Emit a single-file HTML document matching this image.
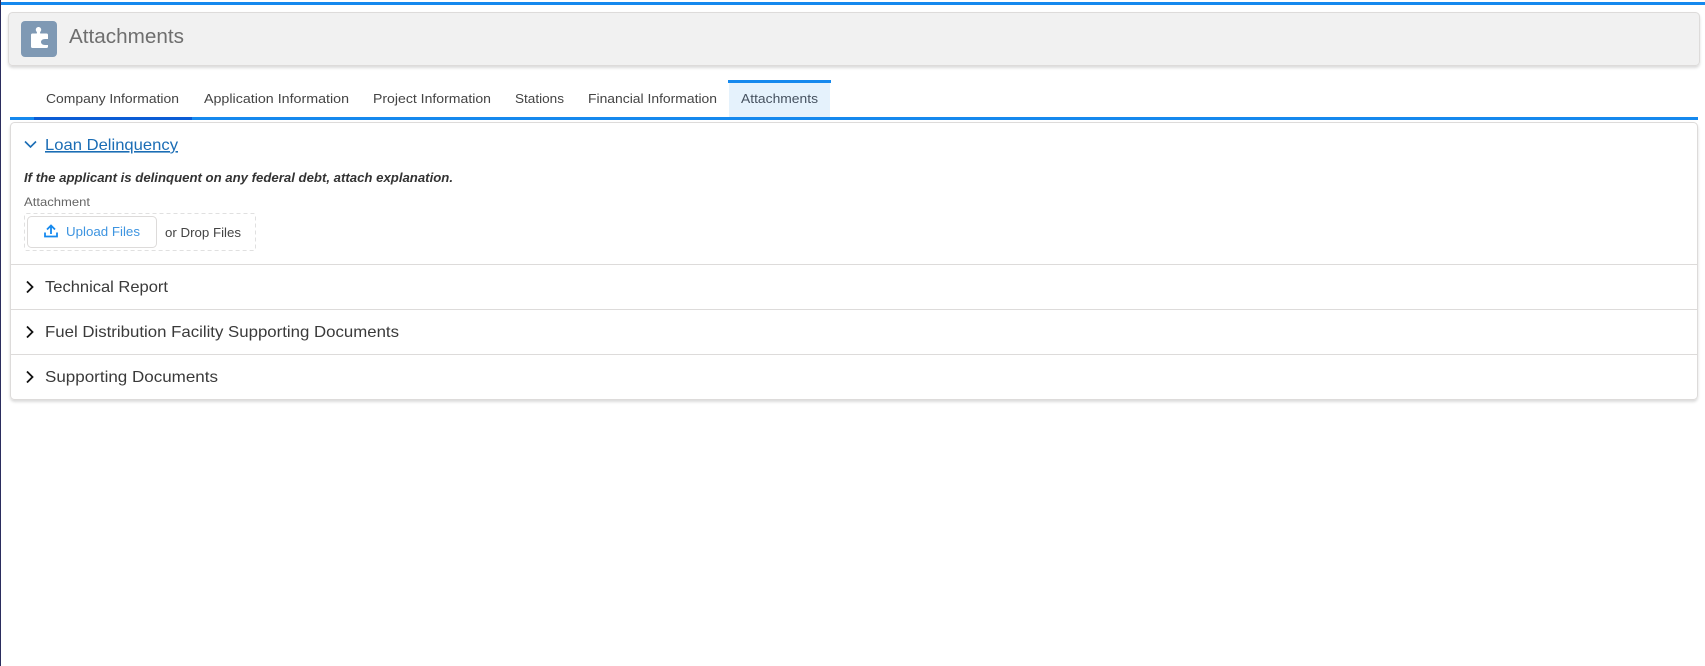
<!DOCTYPE html>
<html lang="en">
<head>
<meta charset="utf-8">
<title>Attachments</title>
<style>
html,body{margin:0;padding:0;background:#fff;width:1705px;height:666px;overflow:hidden}
svg{display:block;position:absolute;left:0;top:0}
text{font-family:"Liberation Sans",sans-serif}
</style>
</head>
<body>
<svg width="1705" height="666" viewBox="0 0 1705 666" xmlns="http://www.w3.org/2000/svg">
<defs>
<filter id="s" x="-2%" y="-10%" width="104%" height="125%">
<feDropShadow dx="0" dy="2" stdDeviation="1.200" flood-color="#000" flood-opacity="0.14"/>
</filter>
</defs>
<rect x="0" y="0" width="1" height="666" fill="#2b2d5e"/>
<rect x="1" y="2" width="1704" height="3" fill="#1589ee"/>

<rect x="8.500" y="12.500" width="1691" height="53" rx="4" fill="#f1f1f1" stroke="#dddbda" filter="url(#s)"/>
<rect x="21" y="21" width="36" height="36" rx="4" fill="#7f99b4"/>
<path d="M31 35q0-1.500 1.500-1.500H36.500q.8 0 .4-1.200c-.5-1-1.100-1.400-1.100-2.500 0-1.600 1.200-2.800 2.700-2.800s2.700 1.200 2.700 2.800c0 1.100-.6 1.500-1.100 2.500q-.4 1.200.4 1.200H46.500q1.500 0 1.500 1.500V39h-3c-2.500 0-4 1.400-4 3s1.500 3 4 3h3v1.500q0 1.500-1.500 1.500h-14q-1.500 0-1.500-1.500z" fill="#fff"/>
<text x="69" y="43" font-size="20" fill="#6e6e6e" textLength="115" lengthAdjust="spacingAndGlyphs">Attachments</text>

<g font-size="13" fill="#444">
<text x="46" y="103" textLength="133" lengthAdjust="spacingAndGlyphs">Company Information</text>
<text x="204" y="103" textLength="145" lengthAdjust="spacingAndGlyphs">Application Information</text>
<text x="373" y="103" textLength="118" lengthAdjust="spacingAndGlyphs">Project Information</text>
<text x="515" y="103" textLength="49" lengthAdjust="spacingAndGlyphs">Stations</text>
<text x="588" y="103" textLength="129" lengthAdjust="spacingAndGlyphs">Financial Information</text>
</g>
<rect x="729" y="83" width="101" height="34" fill="#e5f2fc"/>
<rect x="728" y="80" width="103" height="3" fill="#1589ee"/>
<text x="741" y="103" font-size="13" fill="#465260" textLength="77" lengthAdjust="spacingAndGlyphs">Attachments</text>
<rect x="10" y="117" width="1688" height="3" fill="#1589ee"/>
<rect x="34" y="117" width="158" height="3" fill="#0b5cd5"/>

<rect x="10.500" y="122.500" width="1687" height="277" rx="4" fill="#fff" stroke="#dddbda" filter="url(#s)"/>
<path d="M25 141.500l5.500 5.500 5.500-5.500" fill="none" stroke="#1b6db5" stroke-width="1.600"/>
<text x="45" y="150" font-size="16" fill="#1b6db5" text-decoration="underline" textLength="133" lengthAdjust="spacingAndGlyphs">Loan Delinquency</text>
<text x="24" y="182" font-size="13" font-weight="bold" font-style="italic" fill="#333" textLength="429" lengthAdjust="spacingAndGlyphs">If the applicant is delinquent on any federal debt, attach explanation.</text>
<text x="24" y="206" font-size="12" fill="#666" textLength="66" lengthAdjust="spacingAndGlyphs">Attachment</text>
<rect x="24.500" y="213.500" width="231" height="37" rx="2" fill="#fff" stroke="#e0e0e0" stroke-dasharray="4 3"/>
<rect x="27.500" y="216.500" width="129" height="31" rx="4" fill="#fff" stroke="#dddbda"/>
<path d="M45 232.500v4h12v-4M51 234v-8M47 229.500l4-4 4 4" fill="none" stroke="#1589ee" stroke-width="1.800"/>
<text x="66" y="236" font-size="13" fill="#3d94e0" textLength="74" lengthAdjust="spacingAndGlyphs">Upload Files</text>
<text x="165" y="237" font-size="13" fill="#444" textLength="76" lengthAdjust="spacingAndGlyphs">or Drop Files</text>

<rect x="11" y="264" width="1686" height="1" fill="#dddbda"/>
<rect x="11" y="309" width="1686" height="1" fill="#dddbda"/>
<rect x="11" y="354" width="1686" height="1" fill="#dddbda"/>
<g fill="none" stroke="#111" stroke-width="1.800">
<path d="M27 281.500l5.500 5.500-5.500 5.500"/>
<path d="M27 326.500l5.500 5.500-5.500 5.500"/>
<path d="M27 371.500l5.500 5.500-5.500 5.500"/>
</g>
<g font-size="16" fill="#3a3a3a">
<text x="45" y="292" textLength="123" lengthAdjust="spacingAndGlyphs">Technical Report</text>
<text x="45" y="337" textLength="354" lengthAdjust="spacingAndGlyphs">Fuel Distribution Facility Supporting Documents</text>
<text x="45" y="382" textLength="173" lengthAdjust="spacingAndGlyphs">Supporting Documents</text>
</g>
</svg>
</body>
</html>
